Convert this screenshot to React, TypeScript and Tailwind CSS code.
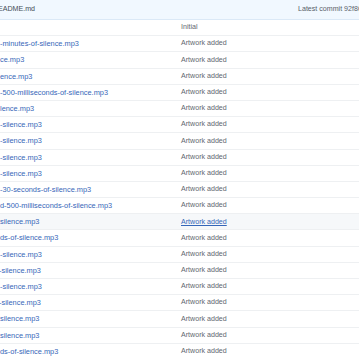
import React from "react";

const rows: { name: string; msg: string; shift?: boolean }[] = [
  { name: "", msg: "Initial" },
  { name: "-minutes-of-silence.mp3", msg: "Artwork added" },
  { name: "ce.mp3", msg: "Artwork added" },
  { name: "ence.mp3", msg: "Artwork added" },
  { name: "-500-milliseconds-of-silence.mp3", msg: "Artwork added" },
  { name: "lence.mp3", msg: "Artwork added" },
  { name: "-silence.mp3", msg: "Artwork added" },
  { name: "-silence.mp3", msg: "Artwork added" },
  { name: "-silence.mp3", msg: "Artwork added" },
  { name: "-silence.mp3", msg: "Artwork added" },
  { name: "-30-seconds-of-silence.mp3", msg: "Artwork added" },
  { name: "d-500-milliseconds-of-silence.mp3", msg: "Artwork added" },
  { name: "silence.mp3", msg: "Artwork added" },
  { name: "ds-of-silence.mp3", msg: "Artwork added" },
  { name: "-silence.mp3", msg: "Artwork added" },
  { name: "f-silence.mp3", msg: "Artwork added", shift: true },
  { name: "-silence.mp3", msg: "Artwork added" },
  { name: "f-silence.mp3", msg: "Artwork added", shift: true },
  { name: "silence.mp3", msg: "Artwork added" },
  { name: "silence.mp3", msg: "Artwork added" },
  { name: "ds-of-silence.mp3", msg: "Artwork added" },
];

export default function App() {
  return (
    <div
      className="w-[359px] h-[359px] overflow-hidden bg-white text-[7.1px]"
      style={{ fontFamily: '"Liberation Sans", Arial, sans-serif' }}
    >
      <div className="flex h-[20px] items-center bg-[#f1f8ff] border-b border-[#dbe9f7] text-[#444d56] whitespace-nowrap">
        <div className="w-[298px] shrink-0 overflow-hidden">
          <span className="ml-[-2px]">EADME.md</span>
        </div>
        <div className="shrink-0 text-[#586069]">Latest commit 92f8606</div>
      </div>
      {rows.map((r, i) => {
        const hl = i === 12;
        return (
          <div
            key={i}
            className={`flex h-[16.2px] items-center border-b border-[#eef0f2] whitespace-nowrap ${
              hl ? "bg-[#f6f8fa]" : "bg-white"
            }`}
          >
            <div className="w-[181px] shrink-0 overflow-hidden text-[#3566b8] text-[7.4px]">
              <span className={r.shift ? "ml-[-3px]" : ""}>{r.name}</span>
            </div>
            <div
              className={
                hl
                  ? "text-[#3566b8] underline"
                  : "text-[#5f6770]"
              }
            >
              {r.msg}
            </div>
          </div>
        );
      })}
    </div>
  );
}
